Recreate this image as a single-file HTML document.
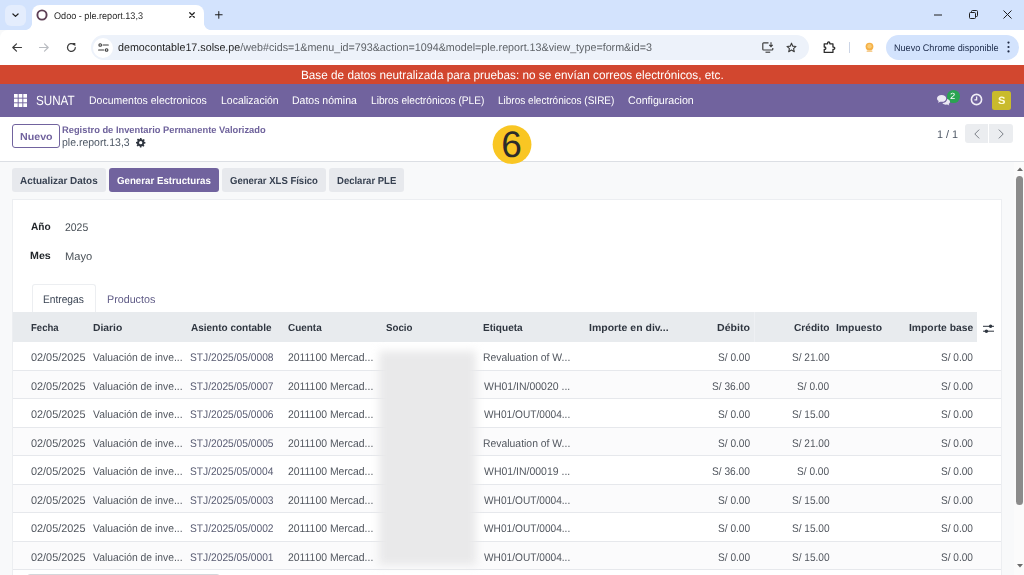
<!DOCTYPE html>
<html lang="es">
<head>
<meta charset="utf-8">
<title>Odoo - ple.report.13,3</title>
<style>
*{box-sizing:border-box;margin:0;padding:0}
html,body{width:1024px;height:575px;overflow:hidden;background:#f8f9fa;font-family:"Liberation Sans",sans-serif;color:#374151}
.a{position:absolute}
.t{position:absolute;white-space:nowrap;line-height:1;transform-origin:0 50%;display:inline-block;text-rendering:geometricPrecision}
svg{position:absolute;overflow:visible}
#tabstrip{left:0;top:0;width:1024px;height:30px;background:#d3e3fd}
#tabdd{left:4.5px;top:5px;width:21px;height:20.5px;border-radius:6px;background:#e4edfd}
#tab{left:32px;top:5px;width:172px;height:26px;background:#fff;border-radius:8px 8px 0 0}
#fl1{left:25px;top:23px;width:7px;height:7px;background:radial-gradient(circle at 0 0,#d3e3fd 6.6px,#fff 7.4px)}
#fl2{left:204px;top:23px;width:7px;height:7px;background:radial-gradient(circle at 100% 0,#d3e3fd 6.6px,#fff 7.4px)}
#toolbar{left:0;top:30px;width:1024px;height:35px;background:#fff;border-radius:8px 0 0 0}
#url{left:91px;top:35px;width:718px;height:25px;border-radius:13px;background:#edf2fa}
#urlic{left:92.5px;top:37.5px;width:20px;height:20px;border-radius:10px;background:#fff}
#upd{left:886px;top:35px;width:133px;height:25px;border-radius:13px;background:#d3e3fd}
#sep{left:849px;top:42px;width:1px;height:11px;background:#ccd5e6}
#banner{left:0;top:64.5px;width:1024px;height:19px;background:#d2472f}
#nav{left:0;top:83.5px;width:1024px;height:33.5px;background:#71639e}
#cp{left:0;top:117px;width:1024px;height:44.5px;background:#fff;border-bottom:1px solid #dcdfe4}
#sheet{left:12px;top:198.5px;width:989.5px;height:377px;background:#fff;border:1px solid #eceef1;border-bottom:none}
.btn{top:168.2px;height:24px;background:#e7e9ed;border-radius:3px}
.btn.pri{background:#71639e}
#nuevo{left:12px;top:123.5px;width:48px;height:24px;border:1px solid #71639e;border-radius:3px;background:#fff}
.pg{top:124.3px;height:19px;background:#ebedf0}
#badge{left:946.8px;top:90px;width:12.8px;height:12.8px;border-radius:50%;background:#2aa352}
#avatar{left:992px;top:90.8px;width:19.2px;height:18.8px;border-radius:2.5px;background:#c9bb2c}
#ntab{left:31.5px;top:283.5px;width:64px;height:29px;background:#fff;border:1px solid #eceef1;border-bottom:none;border-radius:3px 3px 0 0}
#thead{left:13px;top:311.7px;width:964px;height:31px;background:#e8ebee}
#hsep{left:753.5px;top:312px;width:1px;height:30px;background:#eef0f3}
.row{left:13px;width:987.5px;height:28.5px;border-bottom:1px solid #e6e8ec;background:#fff}
.row.alt{background:#fbfbfc}
#blur{left:379px;top:351px;width:97px;height:214px;background:#e9e9ea;filter:blur(4px)}
#thumb{left:1016px;top:175.5px;width:6.5px;height:329px;border-radius:3.5px;background:#8b8b8b}
#circle{left:492.2px;top:125.3px;width:39px;height:39px;border-radius:50%;background:#f9c623}
#hthumb{left:27px;top:573.5px;width:193px;height:8px;border-radius:3px;border:1px solid #d4d7db;background:#fff}
#vtrack{left:1013.5px;top:162px;width:10.5px;height:413px;background:#fbfbfb}
</style>
</head>
<body>
<div class="a" id="tabstrip"></div>
<div class="a" id="tabdd"></div>
<div class="a" id="tab"></div>
<div class="a" id="fl1"></div>
<div class="a" id="fl2"></div>
<div class="a" id="toolbar"></div>
<div class="a" id="url"></div>
<div class="a" id="urlic"></div>
<div class="a" id="upd"></div>
<div class="a" id="sep"></div>
<div class="a" id="banner"></div>
<div class="a" id="nav"></div>
<div class="a" id="cp"></div>
<div class="a" id="nuevo"></div>
<div class="a pg" style="left:964.7px;width:23.8px;border-radius:3px 0 0 3px"></div>
<div class="a pg" style="left:989.2px;width:23.6px;border-radius:0 3px 3px 0"></div>
<div class="a btn" style="left:12.3px;width:93.5px"></div>
<div class="a btn pri" style="left:108.7px;width:110px"></div>
<div class="a btn" style="left:221.9px;width:104.1px"></div>
<div class="a btn" style="left:329px;width:75px"></div>
<div class="a" id="sheet"></div>
<div class="a" id="ntab"></div>
<div class="a" id="thead"></div>
<div class="a" id="hsep"></div>
<div class="a row" style="top:342.2px"></div>
<div class="a row alt" style="top:370.7px"></div>
<div class="a row" style="top:399.2px"></div>
<div class="a row alt" style="top:427.7px"></div>
<div class="a row" style="top:456.2px"></div>
<div class="a row alt" style="top:484.7px"></div>
<div class="a row" style="top:513.2px"></div>
<div class="a row alt" style="top:541.7px"></div>
<div class="a" id="blur"></div>
<div class="a" id="vtrack"></div>
<div class="a" id="thumb"></div>
<div class="a" id="hthumb"></div>
<div class="a" id="badge"></div>
<div class="a" id="avatar"></div>
<svg style="left:0;top:0" width="1024" height="200"><circle cx="512.05" cy="144.55" r="19.4" fill="#f9c623"/></svg>
<!-- chrome tab strip icons -->
<svg style="left:11.5px;top:12.7px" width="7" height="4.7" viewBox="0 0 9 6"><path d="M1.2 1.2 L4.5 4.3 L7.8 1.2" fill="none" stroke="#1f1f1f" stroke-width="1.6" stroke-linecap="round" stroke-linejoin="round"/></svg>
<svg style="left:36px;top:9px" width="12" height="12" viewBox="0 0 12 12"><circle cx="6" cy="6" r="4.6" fill="none" stroke="#5d3f55" stroke-width="1.9"/></svg>
<svg style="left:188.9px;top:12.2px" width="6" height="6" viewBox="0 0 8 8"><path d="M1 1 L7 7 M7 1 L1 7" stroke="#1f1f1f" stroke-width="1.7" stroke-linecap="round"/></svg>
<svg style="left:215px;top:11.4px" width="7.6" height="7.6" viewBox="0 0 9 9"><path d="M4.5 0.5 V8.5 M0.5 4.5 H8.5" stroke="#1f1f1f" stroke-width="1.2" stroke-linecap="round"/></svg>
<!-- window controls -->
<svg style="left:934px;top:13.5px" width="8" height="2" viewBox="0 0 8 2"><path d="M0 1 H8" stroke="#1f1f1f" stroke-width="1"/></svg>
<svg style="left:968.5px;top:9.5px" width="9" height="9" viewBox="0 0 9 9"><rect x="0.5" y="2.5" width="6" height="6" rx="1" fill="none" stroke="#1f1f1f" stroke-width="1"/><path d="M2.5 2.5 V1.5 a1 1 0 0 1 1 -1 H7.5 a1 1 0 0 1 1 1 V5.5 a1 1 0 0 1 -1 1 H6.5" fill="none" stroke="#1f1f1f" stroke-width="1"/></svg>
<svg style="left:1003px;top:10px" width="9" height="9" viewBox="0 0 9 9"><path d="M0.5 0.5 L8.5 8.5 M8.5 0.5 L0.5 8.5" stroke="#1f1f1f" stroke-width="1"/></svg>
<!-- toolbar -->
<svg style="left:12px;top:42.5px" width="10" height="9" viewBox="0 0 10 9"><path d="M9.5 4.5 H1 M4.5 0.8 L0.8 4.5 L4.5 8.2" fill="none" stroke="#3c3c3c" stroke-width="1.2" stroke-linecap="round" stroke-linejoin="round"/></svg>
<svg style="left:39px;top:42.5px" width="10" height="9" viewBox="0 0 10 9"><path d="M0.5 4.5 H9 M5.5 0.8 L9.2 4.5 L5.5 8.2" fill="none" stroke="#b9bcc1" stroke-width="1.2" stroke-linecap="round" stroke-linejoin="round"/></svg>
<svg style="left:65.5px;top:42px" width="11" height="11" viewBox="0 0 11 11"><path d="M9.3 5.5 A3.9 3.9 0 1 1 7.9 2.5" fill="none" stroke="#3c3c3c" stroke-width="1.25" stroke-linecap="round"/><path d="M6 1 H9.3 V4.3 Z" fill="#3c3c3c"/></svg>
<svg style="left:97.5px;top:43px" width="11" height="9" viewBox="0 0 11 9"><circle cx="2.2" cy="2" r="1.3" fill="none" stroke="#3c3c3c" stroke-width="1.1"/><path d="M5 2 H10.3" stroke="#3c3c3c" stroke-width="1.1" stroke-linecap="round"/><circle cx="8.6" cy="7" r="1.3" fill="none" stroke="#3c3c3c" stroke-width="1.1"/><path d="M0.6 7 H5.8" stroke="#3c3c3c" stroke-width="1.1" stroke-linecap="round"/></svg>
<!-- install -->
<svg style="left:762px;top:41.5px" width="12" height="11" viewBox="0 0 12 11"><path d="M6.5 0.8 H1.6 a0.8 0.8 0 0 0 -0.8 0.8 V7.2 a0.8 0.8 0 0 0 0.8 0.8 H10 a0.8 0.8 0 0 0 0.8 -0.8 V6" fill="none" stroke="#3c3c3c" stroke-width="1.15"/><path d="M3.5 10.2 H8.2" stroke="#3c3c3c" stroke-width="1.15"/><path d="M9 0.3 V4.3 M7.3 2.8 L9 4.6 L10.7 2.8" fill="none" stroke="#3c3c3c" stroke-width="1.1"/></svg>
<!-- star -->
<svg style="left:785.5px;top:41.5px" width="11" height="11" viewBox="0 0 24 24"><path d="M12 2.6 L14.8 9.1 L21.8 9.7 L16.5 14.3 L18.1 21.2 L12 17.5 L5.9 21.2 L7.5 14.3 L2.2 9.7 L9.2 9.1 Z" fill="none" stroke="#3c3c3c" stroke-width="2.4" stroke-linejoin="round"/></svg>
<!-- extensions -->
<svg style="left:823.3px;top:40.6px" width="12.6" height="12.2" viewBox="0 0 12 12"><path d="M1 2.8 H4.3 V2 a1.1 1.1 0 0 1 2.2 0 V2.8 H9.6 V6 H10.3 a1.1 1.1 0 0 1 0 2.2 H9.6 V11.2 H1 V8.3 H1.4 a1.2 1.2 0 0 0 0 -2.4 H1 Z" fill="none" stroke="#2b2b2b" stroke-width="1.25" stroke-linejoin="round"/></svg>
<!-- profile -->
<svg style="left:864.4px;top:41.6px" width="11" height="12" viewBox="0 0 11 12"><circle cx="5.5" cy="4.6" r="3.9" fill="#f5b045"/><circle cx="5.5" cy="4.3" r="2.2" fill="#f9cb74"/><rect x="2.6" y="8.6" width="5.8" height="1.1" rx="0.5" fill="#f3bd6c"/></svg>
<!-- dots -->
<svg style="left:1006.5px;top:41px" width="3" height="12" viewBox="0 0 3 12"><circle cx="1.5" cy="1.6" r="1.1" fill="#1f2a44"/><circle cx="1.5" cy="6" r="1.1" fill="#1f2a44"/><circle cx="1.5" cy="10.4" r="1.1" fill="#1f2a44"/></svg>
<!-- navbar grid -->
<svg style="left:13.5px;top:93.5px" width="13" height="13" viewBox="0 0 13 13"><g fill="#fff"><rect x="0" y="0" width="3.7" height="3.7"/><rect x="4.65" y="0" width="3.7" height="3.7"/><rect x="9.3" y="0" width="3.7" height="3.7"/><rect x="0" y="4.65" width="3.7" height="3.7"/><rect x="4.65" y="4.65" width="3.7" height="3.7"/><rect x="9.3" y="4.65" width="3.7" height="3.7"/><rect x="0" y="9.3" width="3.7" height="3.7"/><rect x="4.65" y="9.3" width="3.7" height="3.7"/><rect x="9.3" y="9.3" width="3.7" height="3.7"/></g></svg>
<!-- chat -->
<svg style="left:937px;top:94.5px" width="14" height="11" viewBox="0 0 14 11"><path d="M4.6 0 C2 0 0 1.5 0 3.4 C0 4.5 0.7 5.4 1.7 6 L1 7.8 L3.3 6.7 C3.7 6.8 4.2 6.8 4.6 6.8 C7.2 6.8 9.2 5.3 9.2 3.4 C9.2 1.5 7.2 0 4.6 0 Z" fill="#ece9f4"/><path d="M10.2 3.9 C11.9 4.3 13 5.4 13 6.7 C13 7.6 12.5 8.4 11.6 8.9 L12.3 10.6 L10.2 9.6 C9.8 9.7 9.4 9.7 9 9.7 C7.4 9.7 6.1 9.1 5.4 8.1 C8 7.9 10.1 6.2 10.2 3.9 Z" fill="#ece9f4"/></svg>
<!-- clock -->
<svg style="left:969.5px;top:92.6px" width="13" height="13" viewBox="0 0 13 13"><circle cx="6.5" cy="6.5" r="5.1" fill="none" stroke="#f1eef7" stroke-width="1.6"/><path d="M6.6 3.6 V6.9 H4.4" fill="none" stroke="#f1eef7" stroke-width="1.3"/></svg>
<!-- gear -->
<svg style="left:135.5px;top:138.2px" width="9.4" height="9.4" viewBox="0 0 24 24"><path fill="#2f3640" fill-rule="evenodd" d="M10 0 h4 l0.6 3.2 a9 9 0 0 1 2.4 1 l2.7 -1.9 2.8 2.8 -1.9 2.7 a9 9 0 0 1 1 2.4 L24 10 v4 l-3.2 0.6 a9 9 0 0 1 -1 2.4 l1.9 2.7 -2.8 2.8 -2.7 -1.9 a9 9 0 0 1 -2.4 1 L14 24 h-4 l-0.6 -3.2 a9 9 0 0 1 -2.4 -1 l-2.7 1.9 -2.8 -2.8 1.9 -2.7 a9 9 0 0 1 -1 -2.4 L0 14 v-4 l3.2 -0.6 a9 9 0 0 1 1 -2.4 L2.300 4.300 5.100 1.500 7.800 3.400 a9 9 0 0 1 2.400 -1 Z M12 7.800 a4.200 4.200 0 1 0 0 8.400 a4.200 4.200 0 1 0 0 -8.400 Z"/></svg>
<!-- pager chevrons -->
<svg style="left:973.5px;top:128.5px" width="6" height="10" viewBox="0 0 6 10"><path d="M5.2 0.6 L0.8 5 L5.2 9.4" fill="none" stroke="#7a7f87" stroke-width="1"/></svg>
<svg style="left:998px;top:128.5px" width="6" height="10" viewBox="0 0 6 10"><path d="M0.8 0.6 L5.2 5 L0.8 9.4" fill="none" stroke="#7a7f87" stroke-width="1"/></svg>
<!-- optional columns -->
<svg style="left:982.5px;top:323.5px" width="11" height="9.5" viewBox="0 0 11 9.5"><path d="M0 2.3 H11 M0 7.2 H11" stroke="#2f3640" stroke-width="1"/><circle cx="7.6" cy="2.3" r="1.7" fill="#2f3640"/><circle cx="3.4" cy="7.2" r="1.7" fill="#2f3640"/></svg>
<!-- scrollbar arrows -->
<svg style="left:1016.5px;top:166.5px" width="6" height="4" viewBox="0 0 6 4"><path d="M0 4 L3 0.5 L6 4 Z" fill="#6b6b6b"/></svg>
<svg style="left:1016.5px;top:563.5px" width="6" height="4" viewBox="0 0 6 4"><path d="M0 0 L3 3.5 L6 0 Z" fill="#6b6b6b"/></svg>

<span class="t" style="left:53.83px;top:12px;font-size:9.6px;color:#1f1f1f;transform:scaleX(0.9484)">Odoo - ple.report.13,3</span>
<span class="t" style="left:117.71px;top:43px;font-size:11px;color:#1f1f1f;transform:scaleX(0.9754)">democontable17.solse.pe<span style="color:#5f6368">/web#cids=1&amp;menu_id=793&amp;action=1094&amp;model=ple.report.13&amp;view_type=form&amp;id=3</span></span>
<span class="t" style="left:894.29px;top:44px;font-size:9.6px;color:#1b2a4a;transform:scaleX(0.9474)">Nuevo Chrome disponible</span>
<span class="t" style="left:301.32px;top:69px;font-size:12px;color:#ffffff;transform:scaleX(0.9793)">Base de datos neutralizada para pruebas: no se envían correos electrónicos, etc.</span>
<span class="t" style="left:35.55px;top:94px;font-size:13.4px;color:#ffffff;transform:scaleX(0.8694)">SUNAT</span>
<span class="t" style="left:89.45px;top:96px;font-size:11px;color:#ffffff;transform:scaleX(0.9533)">Documentos electronicos</span>
<span class="t" style="left:220.95px;top:96px;font-size:11px;color:#ffffff;transform:scaleX(0.9515)">Localización</span>
<span class="t" style="left:291.94px;top:96px;font-size:11px;color:#ffffff;transform:scaleX(0.9552)">Datos nómina</span>
<span class="t" style="left:371.28px;top:96px;font-size:11px;color:#ffffff;transform:scaleX(0.9221)">Libros electrónicos (PLE)</span>
<span class="t" style="left:497.79px;top:96px;font-size:11px;color:#ffffff;transform:scaleX(0.9109)">Libros electrónicos (SIRE)</span>
<span class="t" style="left:628.32px;top:96px;font-size:11px;color:#ffffff;transform:scaleX(0.9693)">Configuracion</span>
<span class="t" style="left:950.48px;top:92px;font-size:9px;color:#ffffff;transform:scaleX(1.0500)">2</span>
<span class="t" style="left:997.68px;top:96px;font-size:10.6px;color:#fffbd6;transform:scaleX(1.0500);font-weight:bold">S</span>
<span class="t" style="left:19.61px;top:133px;font-size:10.2px;color:#71639e;transform:scaleX(1.0467);font-weight:bold">Nuevo</span>
<span class="t" style="left:62.16px;top:126px;font-size:9.5px;color:#6f639c;transform:scaleX(0.9816);font-weight:bold">Registro de Inventario Permanente Valorizado</span>
<span class="t" style="left:62.18px;top:138px;font-size:11px;color:#4b5563;transform:scaleX(0.9534)">ple.report.13,3</span>
<span class="t" style="left:936.86px;top:130px;font-size:11px;color:#4b5563;transform:scaleX(0.9827)">1 / 1</span>
<span class="t" style="left:20.26px;top:177px;font-size:10.2px;color:#374151;transform:scaleX(0.9729);font-weight:bold">Actualizar Datos</span>
<span class="t" style="left:117.22px;top:177px;font-size:10.2px;color:#ffffff;transform:scaleX(0.9524);font-weight:bold">Generar Estructuras</span>
<span class="t" style="left:230.03px;top:177px;font-size:10.2px;color:#374151;transform:scaleX(0.9355);font-weight:bold">Generar XLS Físico</span>
<span class="t" style="left:336.90px;top:177px;font-size:10.2px;color:#374151;transform:scaleX(0.9349);font-weight:bold">Declarar PLE</span>
<span class="t" style="left:30.66px;top:223px;font-size:10.4px;color:#212529;transform:scaleX(0.9744);font-weight:bold">Año</span>
<span class="t" style="left:65.13px;top:223px;font-size:11px;color:#495057;transform:scaleX(0.9489)">2025</span>
<span class="t" style="left:30.13px;top:252px;font-size:10.4px;color:#212529;transform:scaleX(1.0263);font-weight:bold">Mes</span>
<span class="t" style="left:64.59px;top:252px;font-size:11px;color:#495057;transform:scaleX(1.0118)">Mayo</span>
<span class="t" style="left:43.07px;top:295px;font-size:11px;color:#374151;transform:scaleX(0.9271)">Entregas</span>
<span class="t" style="left:107.33px;top:295px;font-size:11px;color:#5f5b86;transform:scaleX(0.9750)">Productos</span>
<span class="t" style="left:30.90px;top:324px;font-size:10.2px;color:#2f3640;transform:scaleX(0.9391);font-weight:bold">Fecha</span>
<span class="t" style="left:93.04px;top:324px;font-size:10.2px;color:#2f3640;transform:scaleX(1.0126);font-weight:bold">Diario</span>
<span class="t" style="left:190.75px;top:324px;font-size:10.2px;color:#2f3640;transform:scaleX(0.9816);font-weight:bold">Asiento contable</span>
<span class="t" style="left:288.01px;top:324px;font-size:10.2px;color:#2f3640;transform:scaleX(0.9752);font-weight:bold">Cuenta</span>
<span class="t" style="left:386.06px;top:324px;font-size:10.2px;color:#2f3640;transform:scaleX(0.9556);font-weight:bold">Socio</span>
<span class="t" style="left:482.86px;top:324px;font-size:10.2px;color:#2f3640;transform:scaleX(0.9873);font-weight:bold">Etiqueta</span>
<span class="t" style="left:589.43px;top:324px;font-size:10.2px;color:#2f3640;transform:scaleX(1.0289);font-weight:bold">Importe en div...</span>
<span class="t" style="left:717.42px;top:324px;font-size:10.2px;color:#2f3640;transform:scaleX(1.0393);font-weight:bold">Débito</span>
<span class="t" style="left:793.90px;top:324px;font-size:10.2px;color:#2f3640;transform:scaleX(0.9957);font-weight:bold">Crédito</span>
<span class="t" style="left:836.34px;top:324px;font-size:10.2px;color:#2f3640;transform:scaleX(1.0147);font-weight:bold">Impuesto</span>
<span class="t" style="left:908.64px;top:324px;font-size:10.2px;color:#2f3640;transform:scaleX(1.0120);font-weight:bold">Importe base</span>
<span class="t" style="left:30.51px;top:353px;font-size:11px;color:#52575f;transform:scaleX(0.9889)">02/05/2025</span>
<span class="t" style="left:92.96px;top:353px;font-size:11px;color:#52575f;transform:scaleX(0.9415)">Valuación de inve...</span>
<span class="t" style="left:190.24px;top:353px;font-size:11px;color:#5a5d73;transform:scaleX(0.9292)">STJ/2025/05/0008</span>
<span class="t" style="left:288.03px;top:353px;font-size:11px;color:#52575f;transform:scaleX(0.9465)">2011100 Mercad...</span>
<span class="t" style="left:482.65px;top:353px;font-size:11px;color:#52575f;transform:scaleX(0.9452)">Revaluation of W...</span>
<span class="t" style="left:718.14px;top:353px;font-size:11px;color:#52575f;transform:scaleX(0.9206)">S/ 0.00</span>
<span class="t" style="left:791.84px;top:353px;font-size:11px;color:#52575f;transform:scaleX(0.9175)">S/ 21.00</span>
<span class="t" style="left:940.74px;top:353px;font-size:11px;color:#52575f;transform:scaleX(0.9176)">S/ 0.00</span>
<span class="t" style="left:30.51px;top:382px;font-size:11px;color:#52575f;transform:scaleX(0.9889)">02/05/2025</span>
<span class="t" style="left:92.96px;top:382px;font-size:11px;color:#52575f;transform:scaleX(0.9415)">Valuación de inve...</span>
<span class="t" style="left:190.24px;top:382px;font-size:11px;color:#5a5d73;transform:scaleX(0.9292)">STJ/2025/05/0007</span>
<span class="t" style="left:288.03px;top:382px;font-size:11px;color:#52575f;transform:scaleX(0.9465)">2011100 Mercad...</span>
<span class="t" style="left:483.60px;top:382px;font-size:11px;color:#52575f;transform:scaleX(0.9531)">WH01/IN/00020 ...</span>
<span class="t" style="left:712.44px;top:382px;font-size:11px;color:#52575f;transform:scaleX(0.9250)">S/ 36.00</span>
<span class="t" style="left:797.24px;top:382px;font-size:11px;color:#52575f;transform:scaleX(0.9206)">S/ 0.00</span>
<span class="t" style="left:940.74px;top:382px;font-size:11px;color:#52575f;transform:scaleX(0.9176)">S/ 0.00</span>
<span class="t" style="left:30.51px;top:410px;font-size:11px;color:#52575f;transform:scaleX(0.9889)">02/05/2025</span>
<span class="t" style="left:92.96px;top:410px;font-size:11px;color:#52575f;transform:scaleX(0.9415)">Valuación de inve...</span>
<span class="t" style="left:190.24px;top:410px;font-size:11px;color:#5a5d73;transform:scaleX(0.9292)">STJ/2025/05/0006</span>
<span class="t" style="left:288.03px;top:410px;font-size:11px;color:#52575f;transform:scaleX(0.9465)">2011100 Mercad...</span>
<span class="t" style="left:483.60px;top:410px;font-size:11px;color:#52575f;transform:scaleX(0.9222)">WH01/OUT/0004...</span>
<span class="t" style="left:718.14px;top:410px;font-size:11px;color:#52575f;transform:scaleX(0.9206)">S/ 0.00</span>
<span class="t" style="left:791.84px;top:410px;font-size:11px;color:#52575f;transform:scaleX(0.9175)">S/ 15.00</span>
<span class="t" style="left:940.74px;top:410px;font-size:11px;color:#52575f;transform:scaleX(0.9176)">S/ 0.00</span>
<span class="t" style="left:30.51px;top:439px;font-size:11px;color:#52575f;transform:scaleX(0.9889)">02/05/2025</span>
<span class="t" style="left:92.96px;top:439px;font-size:11px;color:#52575f;transform:scaleX(0.9415)">Valuación de inve...</span>
<span class="t" style="left:190.24px;top:439px;font-size:11px;color:#5a5d73;transform:scaleX(0.9292)">STJ/2025/05/0005</span>
<span class="t" style="left:288.03px;top:439px;font-size:11px;color:#52575f;transform:scaleX(0.9465)">2011100 Mercad...</span>
<span class="t" style="left:482.65px;top:439px;font-size:11px;color:#52575f;transform:scaleX(0.9452)">Revaluation of W...</span>
<span class="t" style="left:718.14px;top:439px;font-size:11px;color:#52575f;transform:scaleX(0.9206)">S/ 0.00</span>
<span class="t" style="left:791.84px;top:439px;font-size:11px;color:#52575f;transform:scaleX(0.9175)">S/ 21.00</span>
<span class="t" style="left:940.74px;top:439px;font-size:11px;color:#52575f;transform:scaleX(0.9176)">S/ 0.00</span>
<span class="t" style="left:30.51px;top:467px;font-size:11px;color:#52575f;transform:scaleX(0.9889)">02/05/2025</span>
<span class="t" style="left:92.96px;top:467px;font-size:11px;color:#52575f;transform:scaleX(0.9415)">Valuación de inve...</span>
<span class="t" style="left:190.24px;top:467px;font-size:11px;color:#5a5d73;transform:scaleX(0.9266)">STJ/2025/05/0004</span>
<span class="t" style="left:288.03px;top:467px;font-size:11px;color:#52575f;transform:scaleX(0.9465)">2011100 Mercad...</span>
<span class="t" style="left:483.60px;top:467px;font-size:11px;color:#52575f;transform:scaleX(0.9531)">WH01/IN/00019 ...</span>
<span class="t" style="left:712.44px;top:467px;font-size:11px;color:#52575f;transform:scaleX(0.9250)">S/ 36.00</span>
<span class="t" style="left:797.24px;top:467px;font-size:11px;color:#52575f;transform:scaleX(0.9206)">S/ 0.00</span>
<span class="t" style="left:940.74px;top:467px;font-size:11px;color:#52575f;transform:scaleX(0.9176)">S/ 0.00</span>
<span class="t" style="left:30.51px;top:496px;font-size:11px;color:#52575f;transform:scaleX(0.9889)">02/05/2025</span>
<span class="t" style="left:92.96px;top:496px;font-size:11px;color:#52575f;transform:scaleX(0.9415)">Valuación de inve...</span>
<span class="t" style="left:190.24px;top:496px;font-size:11px;color:#5a5d73;transform:scaleX(0.9292)">STJ/2025/05/0003</span>
<span class="t" style="left:288.03px;top:496px;font-size:11px;color:#52575f;transform:scaleX(0.9465)">2011100 Mercad...</span>
<span class="t" style="left:483.60px;top:496px;font-size:11px;color:#52575f;transform:scaleX(0.9222)">WH01/OUT/0004...</span>
<span class="t" style="left:718.14px;top:496px;font-size:11px;color:#52575f;transform:scaleX(0.9206)">S/ 0.00</span>
<span class="t" style="left:791.84px;top:496px;font-size:11px;color:#52575f;transform:scaleX(0.9175)">S/ 15.00</span>
<span class="t" style="left:940.74px;top:496px;font-size:11px;color:#52575f;transform:scaleX(0.9176)">S/ 0.00</span>
<span class="t" style="left:30.51px;top:524px;font-size:11px;color:#52575f;transform:scaleX(0.9889)">02/05/2025</span>
<span class="t" style="left:92.96px;top:524px;font-size:11px;color:#52575f;transform:scaleX(0.9415)">Valuación de inve...</span>
<span class="t" style="left:190.24px;top:524px;font-size:11px;color:#5a5d73;transform:scaleX(0.9292)">STJ/2025/05/0002</span>
<span class="t" style="left:288.03px;top:524px;font-size:11px;color:#52575f;transform:scaleX(0.9465)">2011100 Mercad...</span>
<span class="t" style="left:483.60px;top:524px;font-size:11px;color:#52575f;transform:scaleX(0.9222)">WH01/OUT/0004...</span>
<span class="t" style="left:718.14px;top:524px;font-size:11px;color:#52575f;transform:scaleX(0.9206)">S/ 0.00</span>
<span class="t" style="left:791.84px;top:524px;font-size:11px;color:#52575f;transform:scaleX(0.9175)">S/ 15.00</span>
<span class="t" style="left:940.74px;top:524px;font-size:11px;color:#52575f;transform:scaleX(0.9176)">S/ 0.00</span>
<span class="t" style="left:30.51px;top:553px;font-size:11px;color:#52575f;transform:scaleX(0.9889)">02/05/2025</span>
<span class="t" style="left:92.96px;top:553px;font-size:11px;color:#52575f;transform:scaleX(0.9415)">Valuación de inve...</span>
<span class="t" style="left:190.24px;top:553px;font-size:11px;color:#5a5d73;transform:scaleX(0.9292)">STJ/2025/05/0001</span>
<span class="t" style="left:288.03px;top:553px;font-size:11px;color:#52575f;transform:scaleX(0.9465)">2011100 Mercad...</span>
<span class="t" style="left:483.60px;top:553px;font-size:11px;color:#52575f;transform:scaleX(0.9222)">WH01/OUT/0004...</span>
<span class="t" style="left:718.14px;top:553px;font-size:11px;color:#52575f;transform:scaleX(0.9206)">S/ 0.00</span>
<span class="t" style="left:791.84px;top:553px;font-size:11px;color:#52575f;transform:scaleX(0.9175)">S/ 15.00</span>
<span class="t" style="left:940.74px;top:553px;font-size:11px;color:#52575f;transform:scaleX(0.9176)">S/ 0.00</span>
<span class="t" style="left:501.3px;top:126.1px;font-size:37px;color:#2b2b2b;transform:scaleX(1)">6</span>
</body>
</html>
